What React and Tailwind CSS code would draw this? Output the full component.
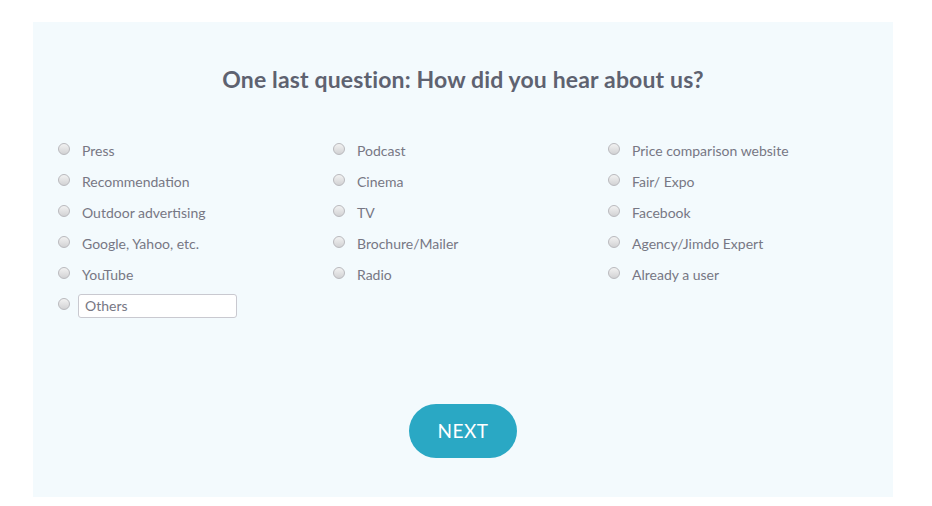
const COLUMNS = [
  ['Press', 'Recommendation', 'Outdoor advertising', 'Google, Yahoo, etc.', 'YouTube'],
  ['Podcast', 'Cinema', 'TV', 'Brochure/Mailer', 'Radio'],
  ['Price comparison website', 'Fair/ Expo', 'Facebook', 'Agency/Jimdo Expert', 'Already a user'],
]

function Radio() {
  return (
    <span className="block w-[12px] h-[12px] rounded-full border border-[#b9b9bd] bg-gradient-to-b from-[#f2f2f2] to-[#d2d2d4] shrink-0" />
  )
}

export default function App() {
  return (
    <div className="w-[932px] h-[506px] bg-white pt-[22px] pl-[33px]" style={{ fontFamily: 'Lato, "Open Sans", sans-serif' }}>
      <div className="w-[860px] h-[475px] bg-[#f3fafd] flex flex-col">
        <h1 className="mt-[43px] text-center text-[23px] leading-[28px] font-bold tracking-[0.15px] text-[#5e6270]">
          One last question: How did you hear about us?
        </h1>

        <div className="mt-[42px] pl-[25px] grid grid-cols-[275px_275px_275px]">
          {COLUMNS.map((col, ci) => (
            <div key={ci} className="flex flex-col">
              {col.map(label => (
                <div key={label} className="h-[31px] flex items-center">
                  <span className="w-[24px] -mt-[3px]"><Radio /></span>
                  <span className="text-[14px] text-[#777784]">{label}</span>
                </div>
              ))}
              {ci === 0 && (
                <div className="h-[31px] flex items-center">
                  <span className="w-[20px] -mt-[3px]"><Radio /></span>
                  <input
                    defaultValue="Others"
                    className="w-[159px] h-[24px] px-[6px] bg-white border border-[#c9c9d0] rounded-[3px] text-[14px] text-[#777784] outline-none"
                  />
                </div>
              )}
            </div>
          ))}
        </div>

        <div className="mt-[83px] flex justify-center">
          <button className="w-[108px] h-[54px] rounded-full bg-[#2aa8c4] text-white text-[19px] tracking-[0.5px]">
            NEXT
          </button>
        </div>
      </div>
    </div>
  )
}
